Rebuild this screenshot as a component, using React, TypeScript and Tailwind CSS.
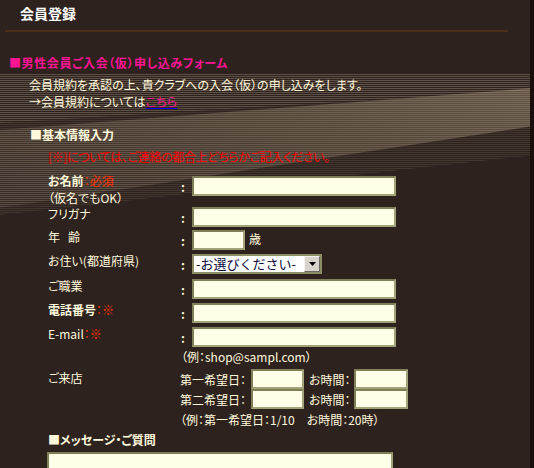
import React from "react";

const cream = "text-[#fff9dc]";

function Field({ w }: { w: string }) {
  return (
    <div
      className={`${w} h-[20px] border-2 border-t-[#7f7f58] border-l-[#7f7f58] border-r-[#a3a37a] border-b-[#a3a37a] bg-[#ffffe8]`}
    />
  );
}

function Colon() {
  return (
    <div className="w-[11px] h-[20px] flex items-end pb-[2px] text-[12px] leading-[14px] font-bold">
      :
    </div>
  );
}

function Row({
  label,
  h,
  children,
}: {
  label: React.ReactNode;
  h: string;
  children: React.ReactNode;
}) {
  return (
    <div className={`flex items-start pt-[2px] ${h}`}>
      <div className="w-[133px] -mt-[1px] leading-[15px]">{label}</div>
      <Colon />
      {children}
    </div>
  );
}

export default function App() {
  return (
    <div
      className={`relative w-[534px] h-[468px] overflow-hidden bg-[#2e221f] border-r-4 border-[#1a0f0c] ${cream} text-[12px] font-['Noto_Sans_CJK_JP','Noto_Sans',sans-serif] [font-feature-settings:'palt']`}
    >
      {/* striped background swoosh */}
      <svg
        className="absolute left-0 top-0 pointer-events-none"
        width="534"
        height="468"
        viewBox="0 0 534 468"
      >
        <defs>
          <pattern id="st" width="4" height="2" patternUnits="userSpaceOnUse">
            <rect width="4" height="1" fill="#b8a88a" />
          </pattern>
          <linearGradient id="hl" x1="0" y1="1" x2="1" y2="0">
            <stop offset="0" stopColor="#9a8a70" stopOpacity="0.08" />
            <stop offset="1" stopColor="#c8b894" stopOpacity="0.35" />
          </linearGradient>
        </defs>
        <polygon points="0,73 534,73 534,155 0,215" fill="url(#st)" opacity="0.16" />
        <polygon points="0,73 534,73 534,90 0,123" fill="url(#st)" opacity="0.22" />
        <polygon points="0,130 534,88 534,126 0,208" fill="url(#hl)" />
        <polygon points="0,130 534,88 534,126 0,208" fill="url(#st)" opacity="0.12" />
      </svg>

      <div className="relative">
        <div className="h-[30px] pl-[20px] pt-[4px] text-[14px] font-bold leading-[18px] text-white">
          会員登録
        </div>
        <div className="ml-[5px] w-[503px] h-[2px] bg-[#4b2f18]" />

        <div className="mt-[23px] pl-[9px] leading-[16px] font-bold tracking-[0.6px] text-[#ff1493]">
          ■男性会員ご入会（仮）申し込みフォーム
        </div>

        <div className="mt-[5px] pl-[29px] leading-[17px]">
          <div>会員規約を承認の上、貴クラブへの入会（仮）の申し込みをします。</div>
          <div>
            →会員規約については
            <span className="text-[#ff1493] underline decoration-[#0000ff] decoration-1 underline-offset-1">
              こちら
            </span>
          </div>
        </div>

        <div className="mt-[17px] pl-[30px] leading-[16px] font-bold">
          ■基本情報入力
        </div>
        <div className="mt-[6px] pl-[48px] leading-[16px] tracking-[-0.35px] text-[#ff0000]">
          [※]については、ご連絡の都合上どちらかご記入ください。
        </div>

        <div className="mt-[9px] pl-[48px]">
          <div className="flex items-start pt-[2px] h-[31px]">
            <div className="w-[133px] -mt-[4px] leading-[17px]">
              <div>
                <span className="font-bold">お名前</span>
                <span className="text-[#ff3300]">：必須</span>
              </div>
              <div>（仮名でもOK）</div>
            </div>
            <Colon />
            <Field w="w-[204px]" />
          </div>
          <Row h="h-[23px]" label="フリガナ">
            <Field w="w-[204px]" />
          </Row>
          <Row
            h="h-[24px]"
            label={
              <>
                年<span className="ml-[8px]">齢</span>
              </>
            }
          >
            <Field w="w-[53px]" />
            <span className="ml-[4px] pt-[1px] leading-[15px]">歳</span>
          </Row>
          <Row h="h-[25px]" label="お住い(都道府県)">
            <div className="w-[130px] h-[20px] border-2 border-[#8e8e66] bg-white flex items-center">
              <span className="flex-1 pl-[2px] text-[13px] leading-[16px] text-[#0a0a3a] [font-feature-settings:normal]">
                -お選びください-
              </span>
              <div className="w-[16px] h-[16px] bg-[#d8d4cc] border border-t-[#f4f2ee] border-l-[#f4f2ee] border-r-[#6c6a66] border-b-[#6c6a66] flex items-center justify-center">
                <svg width="7" height="4" viewBox="0 0 7 4">
                  <polygon points="0,0 7,0 3.5,4" fill="#000" />
                </svg>
              </div>
            </div>
          </Row>
          <Row h="h-[24px]" label="ご職業">
            <Field w="w-[204px]" />
          </Row>
          <Row
            h="h-[24px]"
            label={
              <>
                <span className="font-bold">電話番号</span>
                <span className="text-[#ff3300]">：※</span>
              </>
            }
          >
            <Field w="w-[204px]" />
          </Row>
          <Row
            h="h-[24px]"
            label={
              <>
                <span>E-mail</span>
                <span className="text-[#ff3300]">：※</span>
              </>
            }
          >
            <Field w="w-[204px]" />
          </Row>
          <div className="pl-[133px] leading-[15px]">（例：shop@sampl.com）</div>

          <div className="mt-[5px] flex items-start">
            <div className="w-[132px] pt-[1px] leading-[15px]">ご来店</div>
            <div className="flex flex-col">
              <div className="flex items-center">
                <span className="w-[71px] leading-[15px]">第一希望日：</span>
                <Field w="w-[53px]" />
                <span className="ml-[5px] w-[45px] leading-[15px]">お時間：</span>
                <Field w="w-[54px]" />
              </div>
              <div className="flex items-center">
                <span className="w-[71px] leading-[15px]">第二希望日：</span>
                <Field w="w-[53px]" />
                <span className="ml-[5px] w-[45px] leading-[15px]">お時間：</span>
                <Field w="w-[54px]" />
              </div>
              <div className="mt-[3px] leading-[15px]">
                （例：第一希望日：1/10　お時間：20時）
              </div>
            </div>
          </div>

          <div className="mt-[5px] leading-[16px] font-bold">■メッセージ・ご質問</div>
          <div className="mt-[4px] -ml-[1px]">
            <div className="w-[346px] h-[60px] border-2 border-t-[#7f7f58] border-l-[#7f7f58] border-r-[#a3a37a] border-b-[#a3a37a] bg-[#ffffe8]" />
          </div>
        </div>
      </div>
    </div>
  );
}
